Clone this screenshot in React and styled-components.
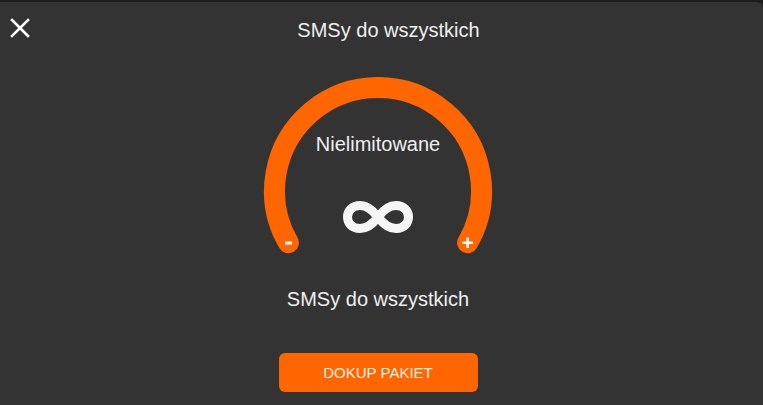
import React from "react";
import styled, { createGlobalStyle } from "styled-components";

const GlobalStyle = createGlobalStyle`
  html, body {
    margin: 0;
    padding: 0;
    background: #1d1d1d;
    font-family: "Liberation Sans", Arial, Helvetica, sans-serif;
  }
  * { box-sizing: border-box; }
`;

const Page = styled.div`
  padding-top: 2px;
  min-height: 100vh;
`;

const Dialog = styled.section`
  background: #333333;
  min-height: calc(100vh - 2px);
  border-top-right-radius: 6px;
  display: flex;
  flex-direction: column;
  color: #efefef;
`;

const Header = styled.header`
  height: 56px;
  display: flex;
  align-items: center;
`;

const CloseButton = styled.button`
  width: 40px;
  height: 40px;
  margin-top: -4px;
  border: 0;
  padding: 0;
  background: transparent;
  display: flex;
  align-items: center;
  justify-content: center;
  cursor: pointer;
`;

const Title = styled.h1`
  flex: 1;
  margin: 0;
  padding-right: 26px;
  text-align: center;
  font-size: 20px;
  font-weight: 400;
  line-height: 23px;
  color: #efefef;
`;

const Body = styled.div`
  display: flex;
  flex-direction: column;
  align-items: center;
  padding-right: 7px;
  padding-top: 8px;
`;

const Gauge = styled.div`
  position: relative;
  width: 240px;
  height: 200px;
  display: flex;
  flex-direction: column;
  align-items: center;
  padding-top: 67px;
`;

const Ring = styled.svg`
  position: absolute;
  inset: 0;
`;

const GaugeValue = styled.div`
  position: relative;
  font-size: 20px;
  line-height: 23px;
  color: #efefef;
`;

const Infinity = styled.svg`
  position: relative;
  margin-top: 45px;
`;

const Label = styled.div`
  margin-top: 22px;
  font-size: 20px;
  line-height: 23px;
  color: #efefef;
`;

const ActionButton = styled.button`
  margin-top: 42px;
  width: 199px;
  height: 39px;
  border: 0;
  border-radius: 6px;
  background: #ff6600;
  color: #fff3ea;
  font-family: inherit;
  font-size: 15px;
  letter-spacing: 0;
  cursor: pointer;
`;

const CloseIcon = () => (
  <svg width="20" height="20" viewBox="0 0 20 20">
    <path d="M2 2 L18 18 M18 2 L2 18" stroke="#ffffff" strokeWidth="2.6" strokeLinecap="square" />
  </svg>
);

// 240° gauge ring: centre (120,125), mid radius 103.5, ends at 150° and 30°
const GaugeRing = () => (
  <Ring width="240" height="200" viewBox="0 0 240 200">
    <path
      d="M30.4 176.75 A103.5 103.5 0 1 1 209.6 176.75"
      fill="none"
      stroke="#ff6600"
      strokeWidth="21"
      strokeLinecap="round"
    />
    <rect x="27" y="175.5" width="7" height="3" fill="#ffffff" />
    <path d="M209.6 171.5 V182 M204.4 176.75 H214.8" stroke="#ffffff" strokeWidth="2.6" />
  </Ring>
);

const InfinityIcon = () => (
  <Infinity width="70" height="32" viewBox="0 0 70 32">
    <path
      d="M35 16 C41 8 47 4.5 53 4.5 C61 4.5 65.5 10 65.5 16 C65.5 22 61 27.5 53 27.5 C47 27.5 41 24 35 16 C29 8 23 4.5 17 4.5 C9 4.5 4.5 10 4.5 16 C4.5 22 9 27.5 17 27.5 C23 27.5 29 24 35 16 Z"
      fill="none"
      stroke="#f5f5f5"
      strokeWidth="9"
      strokeLinejoin="round"
    />
  </Infinity>
);

export default function App() {
  return (
    <>
      <GlobalStyle />
      <Page>
        <Dialog>
          <Header>
            <CloseButton aria-label="Zamknij">
              <CloseIcon />
            </CloseButton>
            <Title>SMSy do wszystkich</Title>
          </Header>
          <Body>
            <Gauge>
              <GaugeRing />
              <GaugeValue>Nielimitowane</GaugeValue>
              <InfinityIcon />
            </Gauge>
            <Label>SMSy do wszystkich</Label>
            <ActionButton>DOKUP PAKIET</ActionButton>
          </Body>
        </Dialog>
      </Page>
    </>
  );
}
